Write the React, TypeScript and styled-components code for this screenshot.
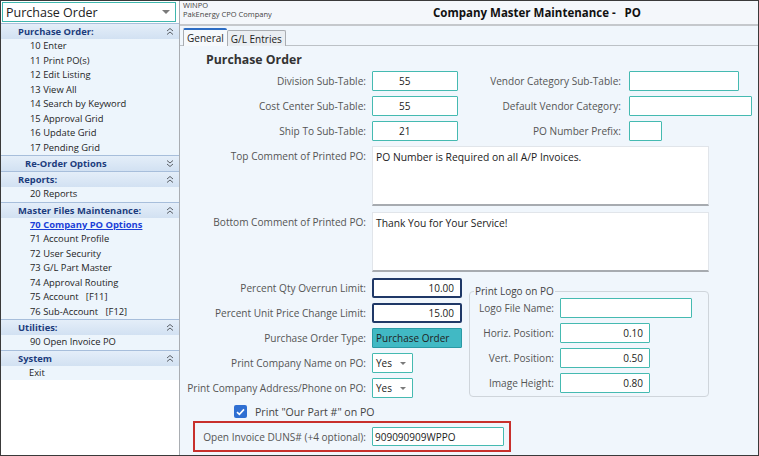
import React from 'react';
import styled, { createGlobalStyle } from 'styled-components';

const GlobalStyle = createGlobalStyle`
  html, body { margin:0; padding:0; }
  body {
    font-family: "Open Sans", "Noto Sans", sans-serif;
    font-size:10px;
    color:#333;
    background:#fff;
  }
  *{ box-sizing:border-box; }
`;

const Frame = styled.div`
  width:759px;
  height:456px;
  border:1px solid #3a3a3a;
  display:flex;
  overflow:hidden;
  background:#fff;
`;

/* ---------- sidebar ---------- */

const Sidebar = styled.aside`
  width:179px;
  flex-shrink:0;
  border-right:1px solid #a9adb2;
  display:flex;
  flex-direction:column;
  background:#fff;
`;

const ModuleSelect = styled.div`
  margin:1px 3px 1px 1px;
  height:20px;
  border:1px solid #3fb7ae;
  background:#fff;
  display:flex;
  align-items:center;
  justify-content:space-between;
  padding:0 5px 0 3px;
  font-size:12.5px;
  color:#222;
`;

const Arrow = styled.span<{ $size?: number }>`
  width:0;
  height:0;
  border-left:${p => p.$size ?? 4}px solid transparent;
  border-right:${p => p.$size ?? 4}px solid transparent;
  border-top:${p => (p.$size ?? 4) - 0.5}px solid #7a7a7a;
`;

const SectionHeader = styled.div<{ $indent?: number }>`
  height:16px;
  border-top:1px solid #a7bedb;
  background:linear-gradient(#e4eef9, #d2e1f2);
  display:flex;
  align-items:center;
  justify-content:space-between;
  padding:0 5px 0 ${p => p.$indent ?? 17}px;
  font-weight:700;
  font-size:9.4px;
  color:#1c3c7d;
`;

const ItemList = styled.div`
  background:#edf5fc;
  display:flex;
  flex-direction:column;
`;

const Item = styled.div<{ $active?: boolean }>`
  height:14.5px;
  line-height:14.5px;
  padding-left:29px;
  font-size:9.4px;
  white-space:pre;
  color:${p => (p.$active ? '#1b3fd8' : '#1e1e1e')};
  font-weight:${p => (p.$active ? 700 : 400)};
  text-decoration:${p => (p.$active ? 'underline' : 'none')};
`;

const ExitItem = styled(Item)`
  padding-left:28px;
`;

function Chevrons({ down }: { down?: boolean }) {
  const d = down ? 'M1 1.5 L4 4 L7 1.5 M1 5 L4 7.5 L7 5' : 'M1 4 L4 1.5 L7 4 M1 7.5 L4 5 L7 7.5';
  return (
    <svg width="8" height="9" viewBox="0 0 8 9">
      <path d={d} fill="none" stroke="#5a5f66" strokeWidth="1" />
    </svg>
  );
}

/* ---------- main ---------- */

const Main = styled.main`
  flex:1;
  display:flex;
  flex-direction:column;
  background:#f0f6fc;
`;

const TopBar = styled.header`
  height:25px;
  background:#f4f7fb;
  border-bottom:2px solid #c5c8cc;
  display:flex;
  align-items:center;
`;

const AppInfo = styled.div`
  width:253px;
  padding-left:3px;
  display:flex;
  flex-direction:column;
  font-size:7.5px;
  line-height:9px;
  color:#444;
  margin-top:-5px;
`;

const Title = styled.h1`
  margin:0;
  font-size:11.5px;
  font-weight:700;
  color:#111;
  white-space:pre;
`;

const TabStrip = styled.div`
  height:20px;
  border-bottom:1px solid #bcc1c6;
  display:flex;
  align-items:flex-end;
  padding-left:3px;
`;

const Tab = styled.div<{ $active?: boolean }>`
  height:${p => (p.$active ? 18 : 16)}px;
  padding:0 3px;
  font-size:10px;
  display:flex;
  align-items:center;
  color:#222;
  background:${p => (p.$active ? '#f6f9fc' : '#eaeef2')};
  border:1px solid #a9adb2;
  border-bottom:none;
  border-top:${p => (p.$active ? '2px solid #2b6cc4' : '1px solid #a9adb2')};
  border-right:${p => (p.$active ? 'none' : '1px solid #a9adb2')};
  border-radius:2px 2px 0 0;
  margin-bottom:-1px;
  position:relative;
`;

const Panel = styled.section`
  flex:1;
  display:flex;
  flex-direction:column;
`;

const SectionTitle = styled.h2`
  margin:6px 0 0 26px;
  height:16px;
  line-height:16px;
  font-size:12.3px;
  font-weight:700;
  color:#333;
`;

const TopGrid = styled.div`
  margin-top:3px;
  display:grid;
  grid-template-columns:192px 86px 171px auto;
  grid-auto-rows:20px;
  row-gap:5px;
  align-items:center;
`;

const Label = styled.label<{ $gap?: number }>`
  text-align:right;
  padding-right:${p => p.$gap ?? 6}px;
  color:#555;
  white-space:nowrap;
  font-size:10.1px;
`;

const TextInput = styled.div<{ $w?: number; $h?: number; $align?: 'left' | 'right'; $indent?: number }>`
  width:${p => (p.$w ? `${p.$w}px` : '100%')};
  height:${p => p.$h ?? 20}px;
  border:1px solid #45bab1;
  border-radius:1px;
  background:#fff;
  display:flex;
  align-items:center;
  justify-content:${p => (p.$align === 'right' ? 'flex-end' : 'flex-start')};
  padding:0 6px 0 ${p => p.$indent ?? 3}px;
  color:#222;
  font-size:10px;
`;

const NavyInput = styled(TextInput)`
  border:2px solid #1f3867;
  border-radius:2px;
`;

const TypeBox = styled(TextInput)`
  background:#41b9c4;
  border:1px solid #2a9aa5;
  font-size:10px;
  padding-left:3px;
`;

const SelectBox = styled(TextInput)`
  justify-content:space-between;
  padding:0 6px 0 3px;
`;

const CommentRow = styled.div<{ $top: number }>`
  margin-top:${p => p.$top}px;
  display:flex;
`;

const CommentLabel = styled(Label)`
  width:192px;
  padding-top:3px;
`;

const Memo = styled.div`
  width:337px;
  height:60px;
  background:#fff;
  border:1px solid #e1e5ea;
  border-bottom:2px solid #a7abb0;
  padding:3px 3px;
  color:#222;
  font-size:10.3px;
`;

const Lower = styled.div`
  margin-top:6px;
  display:flex;
  gap:7px;
`;

const FieldColumn = styled.div`
  display:flex;
  flex-direction:column;
  gap:5px;
`;

const FieldRow = styled.div<{ $labelW: number }>`
  display:flex;
  align-items:center;
  height:20px;
  & > label{ width:${p => p.$labelW}px; flex-shrink:0; }
`;

const GroupBox = styled.fieldset`
  margin:8px 0 0;
  width:240px;
  height:111px;
  border:1px solid #cfd5db;
  border-radius:4px;
  padding:0;
  display:flex;
  flex-direction:column;
  gap:5px;
  & > legend{
    margin-left:4px;
    padding:0 1px;
    font-size:10px;
    color:#444;
    line-height:10px;
  }
`;

const GroupInner = styled(FieldColumn)`
  margin-top:2px;
`;

const CheckRow = styled.div`
  margin:4px 0 0 54px;
  height:19px;
  display:flex;
  align-items:center;
  gap:8px;
  color:#444;
  font-size:10.6px;
`;

const CheckMark = styled.span`
  width:13px;
  height:13px;
  border-radius:2px;
  background:#2f6fd2;
  display:flex;
  align-items:center;
  justify-content:center;
`;

const DunsBox = styled.div`
  margin-left:13px;
  width:318px;
  height:31px;
  border:2px solid #c8302c;
  display:flex;
  align-items:center;
  & > label{ width:177px; flex-shrink:0; }
`;

const sidebar = [
  { title: 'Purchase Order:', items: ['10 Enter', '11 Print PO(s)', '12 Edit Listing', '13 View All', '14 Search by Keyword', '15 Approval Grid', '16 Update Grid', '17 Pending Grid'] },
];

export default function App() {
  return (
    <>
      <GlobalStyle />
      <Frame>
        <Sidebar>
          <ModuleSelect>
            Purchase Order
            <Arrow $size={4.5} />
          </ModuleSelect>

          {sidebar.map(s => (
            <React.Fragment key={s.title}>
              <SectionHeader>{s.title}<Chevrons /></SectionHeader>
              <ItemList>
                {s.items.map(i => <Item key={i}>{i}</Item>)}
              </ItemList>
            </React.Fragment>
          ))}

          <SectionHeader $indent={24}>Re-Order Options<Chevrons down /></SectionHeader>

          <SectionHeader>Reports:<Chevrons /></SectionHeader>
          <ItemList>
            <Item>20 Reports</Item>
          </ItemList>

          <SectionHeader>Master Files Maintenance:<Chevrons /></SectionHeader>
          <ItemList>
            <Item $active>70 Company PO Options</Item>
            <Item>71 Account Profile</Item>
            <Item>72 User Security</Item>
            <Item>73 G/L Part Master</Item>
            <Item>74 Approval Routing</Item>
            <Item>{'75 Account   [F11]'}</Item>
            <Item>{'76 Sub-Account   [F12]'}</Item>
          </ItemList>

          <SectionHeader>Utilities:<Chevrons /></SectionHeader>
          <ItemList>
            <Item>90 Open Invoice PO</Item>
          </ItemList>

          <SectionHeader>System<Chevrons /></SectionHeader>
          <ItemList>
            <ExitItem>Exit</ExitItem>
          </ItemList>
        </Sidebar>

        <Main>
          <TopBar>
            <AppInfo>
              <span>WINPO</span>
              <span>PakEnergy CPO Company</span>
            </AppInfo>
            <Title>{'Company Master Maintenance -   PO'}</Title>
          </TopBar>

          <TabStrip>
            <Tab $active>General</Tab>
            <Tab>G/L Entries</Tab>
          </TabStrip>

          <Panel>
            <SectionTitle>Purchase Order</SectionTitle>

            <TopGrid>
              <Label>Division Sub-Table:</Label>
              <TextInput $w={86} $indent={26}>55</TextInput>
              <Label $gap={8}>Vendor Category Sub-Table:</Label>
              <TextInput $w={110} />

              <Label>Cost Center Sub-Table:</Label>
              <TextInput $w={86} $indent={26}>55</TextInput>
              <Label $gap={8}>Default Vendor Category:</Label>
              <TextInput $w={123} />

              <Label>Ship To Sub-Table:</Label>
              <TextInput $w={86} $indent={26}>21</TextInput>
              <Label $gap={8}>PO Number Prefix:</Label>
              <TextInput $w={33} />
            </TopGrid>

            <CommentRow $top={5}>
              <CommentLabel>Top Comment of Printed PO:</CommentLabel>
              <Memo>PO Number is Required on all A/P Invoices.</Memo>
            </CommentRow>

            <CommentRow $top={6}>
              <CommentLabel>Bottom Comment of Printed PO:</CommentLabel>
              <Memo>Thank You for Your Service!</Memo>
            </CommentRow>

            <Lower>
              <FieldColumn>
                <FieldRow $labelW={192}>
                  <Label>Percent Qty Overrun Limit:</Label>
                  <NavyInput $w={90} $align="right">10.00</NavyInput>
                </FieldRow>
                <FieldRow $labelW={192}>
                  <Label>Percent Unit Price Change Limit:</Label>
                  <NavyInput $w={90} $align="right">15.00</NavyInput>
                </FieldRow>
                <FieldRow $labelW={192}>
                  <Label>Purchase Order Type:</Label>
                  <TypeBox $w={90}>Purchase Order</TypeBox>
                </FieldRow>
                <FieldRow $labelW={192}>
                  <Label>Print Company Name on PO:</Label>
                  <SelectBox $w={41}>Yes<Arrow $size={3.5} /></SelectBox>
                </FieldRow>
                <FieldRow $labelW={192}>
                  <Label>Print Company Address/Phone on PO:</Label>
                  <SelectBox $w={41}>Yes<Arrow $size={3.5} /></SelectBox>
                </FieldRow>
              </FieldColumn>

              <GroupBox>
                <legend>Print Logo on PO</legend>
                <GroupInner>
                  <FieldRow $labelW={90}>
                    <Label>Logo File Name:</Label>
                    <TextInput $w={132} />
                  </FieldRow>
                  <FieldRow $labelW={90}>
                    <Label>Horiz. Position:</Label>
                    <TextInput $w={90} $align="right">0.10</TextInput>
                  </FieldRow>
                  <FieldRow $labelW={90}>
                    <Label>Vert. Position:</Label>
                    <TextInput $w={90} $align="right">0.50</TextInput>
                  </FieldRow>
                  <FieldRow $labelW={90}>
                    <Label>Image Height:</Label>
                    <TextInput $w={90} $align="right">0.80</TextInput>
                  </FieldRow>
                </GroupInner>
              </GroupBox>
            </Lower>

            <CheckRow>
              <CheckMark>
                <svg width="9" height="8" viewBox="0 0 9 8">
                  <path d="M1 4.2 L3.4 6.4 L8 1.4" fill="none" stroke="#fff" strokeWidth="1.6" />
                </svg>
              </CheckMark>
              Print "Our Part #" on PO
            </CheckRow>

            <DunsBox>
              <Label>Open Invoice DUNS# (+4 optional):</Label>
              <TextInput $w={132} $h={19} $indent={2}>909090909WPPO</TextInput>
            </DunsBox>
          </Panel>
        </Main>
      </Frame>
    </>
  );
}
